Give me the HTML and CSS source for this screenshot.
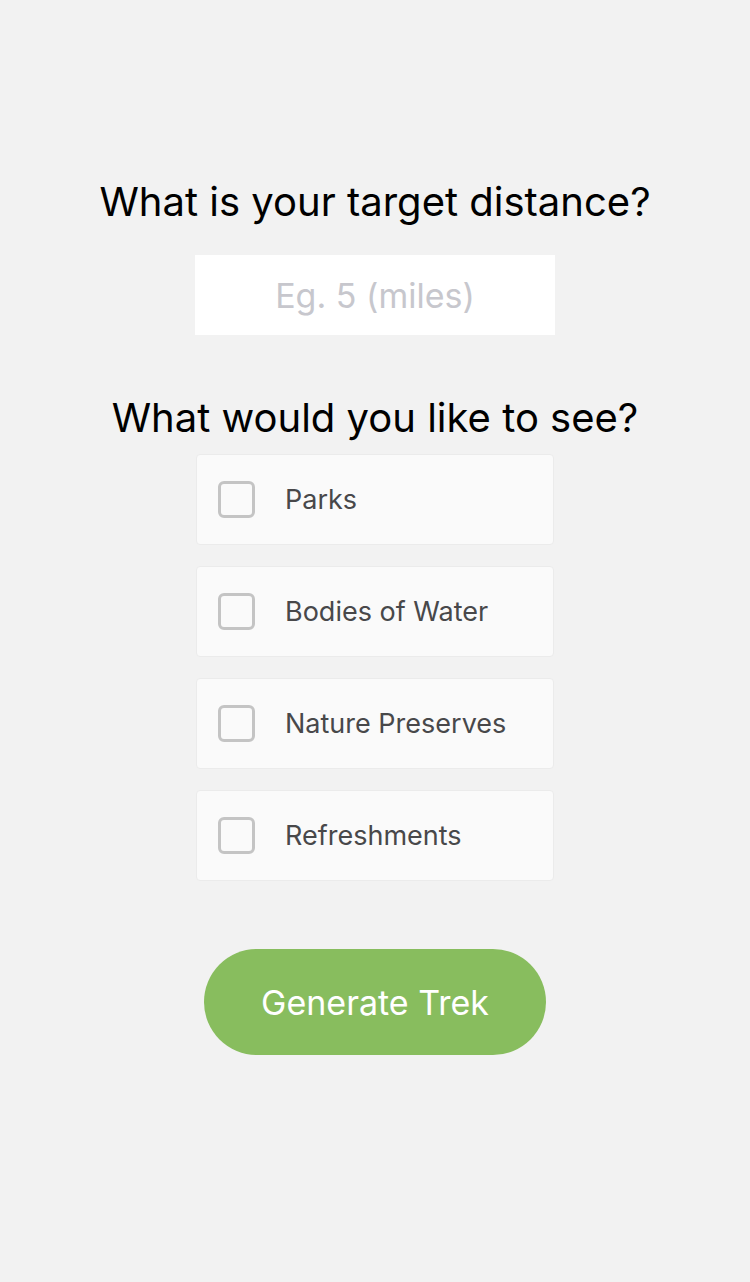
FILE: index.html
```html
<!DOCTYPE html>
<html lang="en">
<head>
<meta charset="UTF-8">
<title>Trek</title>
<link rel="stylesheet" href="styles.css">
</head>
<body>

<div class="screen">
    <h2 class="question">What is your target distance?</h2>
    <input class="distance" type="text" placeholder="Eg. 5 (miles)">

    <h2 class="question second">What would you like to see?</h2>
    <div class="options">
        <label class="option"><span class="box"></span><span class="label">Parks</span></label>
        <label class="option"><span class="box"></span><span class="label">Bodies of Water</span></label>
        <label class="option"><span class="box"></span><span class="label">Nature Preserves</span></label>
        <label class="option"><span class="box"></span><span class="label">Refreshments</span></label>
    </div>

    <button class="generate">Generate Trek</button>
</div>

</body>
</html>
```

FILE: styles.css
```css
body {
    margin: 0;
    background: #f2f2f2;
    font-family: Inter, "Noto Sans", sans-serif;
}
.screen {
    display: flex;
    flex-direction: column;
    align-items: center;
    padding-top: 176px;
}
.question {
    margin: 0;
    font-size: 40px;
    font-weight: 400;
    line-height: 52px;
    color: #000;
}
.second {
    margin-top: 57px;
}
.distance {
    margin-top: 27px;
    width: 360px;
    height: 80px;
    box-sizing: border-box;
    border: none;
    outline: none;
    background: #fff;
    text-align: center;
    font-family: inherit;
    font-size: 34px;
    color: #000;
}
.distance::placeholder {
    color: #c7c7cd;
}
.options {
    margin-top: 10px;
    display: flex;
    flex-direction: column;
    gap: 21px;
}
.option {
    width: 358px;
    height: 91px;
    box-sizing: border-box;
    display: flex;
    align-items: center;
    padding-left: 21px;
    background: #fafafa;
    border: 1px solid #ebebeb;
    border-radius: 4px;
}
.box {
    width: 37px;
    height: 37px;
    box-sizing: border-box;
    border: 3px solid #c4c4c4;
    border-radius: 6px;
}
.label {
    margin-left: 30px;
    font-size: 27px;
    color: #48484a;
}
.generate {
    margin-top: 68px;
    width: 342px;
    height: 106px;
    border: none;
    border-radius: 53px;
    background: #88bd5e;
    color: #fff;
    font-family: inherit;
    font-size: 34px;
}
```
